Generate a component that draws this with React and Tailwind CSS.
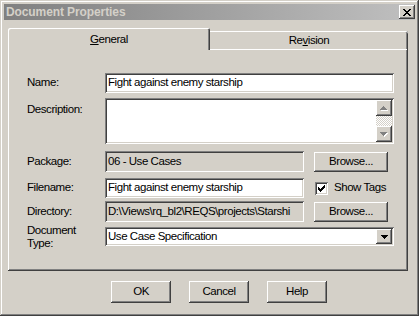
import React from 'react';

const sunken = 'shadow-[inset_1px_1px_0_#808080,inset_-1px_-1px_0_#ffffff,inset_2px_2px_0_#404040,inset_-2px_-2px_0_#d4d0c8]';
const raised = 'shadow-[inset_-1px_-1px_0_#404040,inset_1px_1px_0_#ffffff,inset_-2px_-2px_0_#808080,inset_2px_2px_0_#d4d0c8]';

const Bitmap = ({ rows, color, shadow }) => (
    <svg width={rows[0].length + (shadow ? 1 : 0)} height={rows.length + (shadow ? 1 : 0)} shapeRendering="crispEdges">
        {shadow && rows.flatMap((r, y) => [...r].map((c, x) => c === '#' ? <rect key={`s${x}-${y}`} x={x + 1} y={y + 1} width="1" height="1" fill={shadow} /> : null))}
        {rows.flatMap((r, y) => [...r].map((c, x) => c === '#' ? <rect key={`${x}-${y}`} x={x} y={y} width="1" height="1" fill={color} /> : null))}
    </svg>
);

const CLOSE = ['##....##', '.##..##.', '..####..', '...##...', '..####..', '.##..##.', '##....##'];
const DOWN = ['#######', '.#####.', '..###..', '...#...'];
const UP = ['...#...', '..###..', '.#####.', '#######'];
const CHECK = ['......#', '.....##', '#...###', '##.###.', '#####..', '.###...', '..#....'];

const Field = ({ children, width, white = true }) => (
    <div className={`${sunken} ${white ? 'bg-white' : 'bg-[#d4d0c8]'} ${width} h-full flex items-center pl-[3px] overflow-hidden whitespace-nowrap`}>
        {children}
    </div>
);

const Button = ({ children, className = '' }) => (
    <div className={`${raised} bg-[#d4d0c8] flex items-center justify-center ${className}`}>{children}</div>
);

const App = () => {
    return (
        <div className="w-[419px] h-[316px] bg-[#d4d0c8] p-[4px] flex flex-col overflow-hidden text-black text-[11.5px] tracking-[-0.45px] font-['Liberation_Sans',Arial,sans-serif] shadow-[inset_-1px_-1px_0_#404040,inset_1px_1px_0_#d4d0c8,inset_-2px_-2px_0_#808080,inset_2px_2px_0_#ffffff]">
            {/* title bar */}
            <div className="h-[16px] flex items-center justify-between bg-gradient-to-r from-[#808080] to-[#c0c0c0] pl-[2px]">
                <span className="font-bold text-[12px] tracking-[-0.1px] text-[#d4d0c8]">Document Properties</span>
                <Button className="w-[16px] h-[14px]">
                    <Bitmap rows={CLOSE} color="#000" />
                </Button>
            </div>

            {/* tabs */}
            <div className="mt-[8px] ml-[4px] flex items-end h-[21px]">
                <div className="relative z-10 -mb-px w-[202px] h-[22px] bg-[#d4d0c8] rounded-t-[2px] flex items-center justify-center pt-[1px] shadow-[inset_1px_1px_0_#ffffff,inset_-1px_0_0_#404040,inset_-2px_0_0_#808080]">
                    <span><u>G</u>eneral</span>
                </div>
                <div className="w-[198px] h-[18px] rounded-tr-[2px] flex items-center justify-center pt-[1px] shadow-[inset_0_1px_0_#ffffff,inset_-1px_0_0_#404040,inset_-2px_0_0_#808080]">
                    <span>Re<u>v</u>ision</span>
                </div>
            </div>

            {/* panel */}
            <div className="ml-[4px] w-[400px] h-[222px] pt-[24px] pl-[19px] flex flex-col shadow-[inset_-1px_-1px_0_#404040,inset_1px_1px_0_#ffffff,inset_-2px_-2px_0_#808080]">
                <div className="flex items-center h-[20px]">
                    <span className="w-[78px] shrink-0">Name:</span>
                    <Field width="w-[289px]">Fight against enemy starship</Field>
                </div>

                <div className="mt-[5px] flex items-start h-[46px]">
                    <span className="w-[78px] shrink-0 pt-[3px]">Description:</span>
                    <div className={`${sunken} bg-white w-[289px] h-full p-[2px] flex justify-end`}>
                        <div className="w-[16px] flex flex-col">
                            <Button className="h-[16px]"><Bitmap rows={UP} color="#808080" shadow="#ffffff" /></Button>
                            <div className="flex-1 bg-[image:repeating-conic-gradient(#ffffff_0_25%,#d4d0c8_0_50%)] bg-[length:2px_2px]" />
                            <Button className="h-[16px]"><Bitmap rows={DOWN} color="#808080" shadow="#ffffff" /></Button>
                        </div>
                    </div>
                </div>

                <div className="mt-[7px] flex items-center h-[21px]">
                    <span className="w-[78px] shrink-0">Package:</span>
                    <Field width="w-[199px]" white={false}>06 - Use Cases</Field>
                    <Button className="ml-[10px] w-[74px] h-[20px]">Browse...</Button>
                </div>

                <div className="mt-[6px] flex items-center h-[20px]">
                    <span className="w-[78px] shrink-0">Filename:</span>
                    <Field width="w-[199px]">Fight against enemy starship</Field>
                    <div className={`${sunken} bg-white ml-[11px] w-[13px] h-[13px] flex items-center justify-center`}>
                        <Bitmap rows={CHECK} color="#000" />
                    </div>
                    <span className="ml-[6px]">Show Tags</span>
                </div>

                <div className="mt-[3px] flex items-center h-[21px]">
                    <span className="w-[78px] shrink-0">Directory:</span>
                    <Field width="w-[199px]" white={false}>D:\Views\rq_bl2\REQS\projects\Starshi</Field>
                    <Button className="ml-[10px] w-[74px] h-[20px]">Browse...</Button>
                </div>

                <div className="mt-[5px] flex items-center h-[19px]">
                    <span className="w-[78px] shrink-0 leading-[12.5px]">Document<br />Type:</span>
                    <div className={`${sunken} bg-white w-[289px] h-full p-[2px] flex items-center`}>
                        <span className="flex-1 pl-[1px]">Use Case Specification</span>
                        <Button className="w-[16px] h-full"><Bitmap rows={DOWN} color="#000" /></Button>
                    </div>
                </div>
            </div>

            {/* dialog buttons */}
            <div className="mt-[10px] ml-[107px] flex gap-[18px]">
                <Button className="w-[60px] h-[22px]">OK</Button>
                <Button className="w-[60px] h-[22px]">Cancel</Button>
                <Button className="w-[60px] h-[22px]">Help</Button>
            </div>
        </div>
    );
};

export default App;
